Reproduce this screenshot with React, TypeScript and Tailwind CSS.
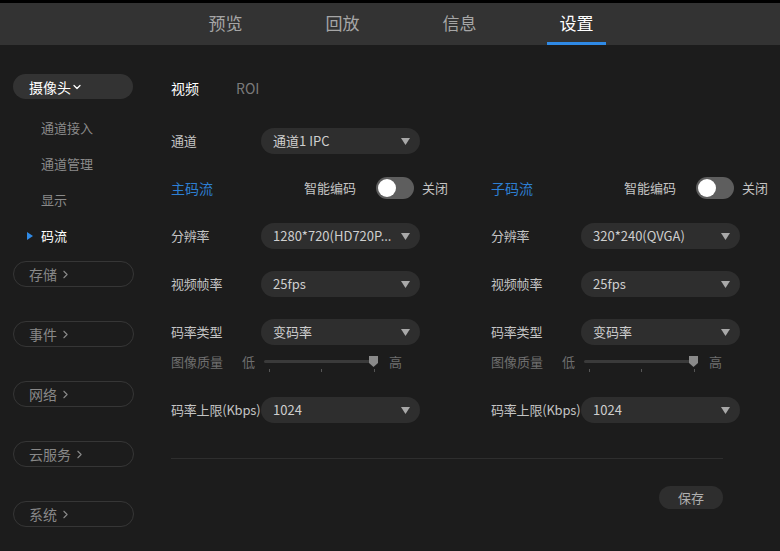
import { ChevronDown, ChevronRight } from 'lucide-react';

const navItems = ['预览', '回放', '信息', '设置'];
const subItems = ['通道接入', '通道管理', '显示', '码流'];
const groups = ['存储', '事件', '网络', '云服务', '系统'];

function Caret() {
  return (
    <svg width="9" height="7" viewBox="0 0 9 7" className="shrink-0">
      <polygon points="0,0 9,0 4.5,7" fill="#a8a8a8" />
    </svg>
  );
}

function Select({ value }: { value: string }) {
  return (
    <div className="w-[159px] h-[26px] shrink-0 rounded-full bg-[#2e2e2e] flex items-center justify-between pl-[12px] pr-[10px]">
      <span className="text-[13px] text-[#cfcfcf] leading-[18px] whitespace-nowrap">{value}</span>
      <Caret />
    </div>
  );
}

function Row({ label, value, mt = 'mt-[22px]' }: { label: string; value: string; mt?: string }) {
  return (
    <div className={`flex items-center h-[26px] ${mt}`}>
      <span className="w-[90px] shrink-0 text-[13px] text-[#c4c4c4] leading-[18px] whitespace-nowrap tracking-[-0.2px]">
        {label}
      </span>
      <Select value={value} />
    </div>
  );
}

function Toggle() {
  return (
    <div className="w-[38px] h-[22px] shrink-0 rounded-full bg-[#5e5e5e] flex items-center px-[2px]">
      <div className="w-[18px] h-[18px] rounded-full bg-white" />
    </div>
  );
}

function Slider() {
  return (
    <div className="flex items-center h-[26px] mt-[4px]">
      <span className="w-[71px] shrink-0 text-[13px] text-[#6e6e6e] leading-[18px]">图像质量</span>
      <span className="w-[22px] shrink-0 text-[13px] text-[#6e6e6e] leading-[18px]">低</span>
      <div className="relative w-[113px] h-[26px] shrink-0">
        <div className="absolute left-0 right-0 top-[11px] h-[3px] rounded-full bg-[#3a3a3a]" />
        <div className="absolute left-[5px] top-[20px] w-px h-[3px] bg-[#555]" />
        <div className="absolute left-[57px] top-[20px] w-px h-[3px] bg-[#555]" />
        <div className="absolute left-[110px] top-[20px] w-px h-[3px] bg-[#555]" />
        <svg width="9" height="11" viewBox="0 0 9 11" className="absolute left-[105px] top-[7px]">
          <path d="M0 0 H9 V7 L4.5 11 L0 7 Z" fill="#8a8a8a" />
        </svg>
      </div>
      <span className="ml-[12px] text-[13px] text-[#6e6e6e] leading-[18px]">高</span>
    </div>
  );
}

function StreamColumn({ title, resolution }: { title: string; resolution: string }) {
  return (
    <div className="w-[320px] shrink-0 flex flex-col">
      <div className="flex items-center h-[26px]">
        <span className="w-[133px] shrink-0 text-[14px] text-[#2d7fd3] leading-[18px]">{title}</span>
        <span className="w-[72px] shrink-0 text-[13px] text-[#c4c4c4] leading-[18px]">智能编码</span>
        <Toggle />
        <span className="ml-[8px] text-[13px] text-[#c4c4c4] leading-[18px] whitespace-nowrap">关闭</span>
      </div>
      <Row label="分辨率" value={resolution} />
      <Row label="视频帧率" value="25fps" />
      <Row label="码率类型" value="变码率" />
      <Slider />
      <Row label="码率上限(Kbps)" value="1024" />
    </div>
  );
}

export default function App() {
  return (
    <div className="w-[780px] h-[551px] bg-[#1c1c1c] flex flex-col overflow-hidden font-['Noto_Sans_CJK_SC','Noto_Sans',sans-serif]">
      <div className="h-[3px] bg-black" />

      {/* Header */}
      <header className="h-[42px] bg-[#333333] flex pl-[196px] gap-[58px]">
        {navItems.map((item) => {
          const active = item === '设置';
          return (
            <div key={item} className="w-[59px] flex flex-col items-center">
              <span
                className={`flex-1 flex items-center text-[17px] leading-none ${
                  active ? 'text-white' : 'text-[#a6a6a6]'
                }`}
              >
                {item}
              </span>
              <div className={`w-full h-[3px] ${active ? 'bg-[#2f8ae6]' : ''}`} />
            </div>
          );
        })}
      </header>

      <div className="flex flex-1">
        {/* Sidebar */}
        <aside className="w-[171px] shrink-0 pl-[13px] pt-[29px] flex flex-col">
          <div className="w-[120px] h-[25px] rounded-full bg-[#333333] flex items-center pl-[16px] text-white">
            <span className="text-[14px] leading-[18px]">摄像头</span>
            <ChevronDown size={12} strokeWidth={2.5} />
          </div>
          <div className="flex flex-col mt-[11px]">
            {subItems.map((item) => {
              const active = item === '码流';
              return (
                <div key={item} className="h-[36px] flex items-center">
                  <span className="w-[28px] flex justify-start pl-[14px]">
                    {active && (
                      <svg width="6" height="8" viewBox="0 0 6 8">
                        <polygon points="0,0 6,4 0,8" fill="#2f8ae6" />
                      </svg>
                    )}
                  </span>
                  <span
                    className={`text-[13px] leading-[18px] ${active ? 'text-white' : 'text-[#8a8a8a]'}`}
                  >
                    {item}
                  </span>
                </div>
              );
            })}
          </div>
          <div className="flex flex-col gap-[34px] mt-[7px]">
            {groups.map((g) => (
              <div
                key={g}
                className="w-[121px] h-[26px] rounded-full border border-[#363636] flex items-center pl-[15px] text-[#888888]"
              >
                <span className="text-[14px] leading-[18px]">{g}</span>
                <ChevronRight size={13} strokeWidth={2} className="ml-[2px]" />
              </div>
            ))}
          </div>
        </aside>

        {/* Main */}
        <main className="flex-1 min-w-0 pt-[30px] flex flex-col">
          <div className="flex items-center h-[26px] gap-[37px]">
            <span className="text-[14px] text-white leading-[18px]">视频</span>
            <span className="text-[14px] text-[#7a7a7a] leading-[18px]">ROI</span>
          </div>
          <Row label="通道" value="通道1 IPC" mt="mt-[27px]" />
          <div className="flex mt-[21px]">
            <StreamColumn title="主码流" resolution="1280*720(HD720P..." />
            <StreamColumn title="子码流" resolution="320*240(QVGA)" />
          </div>
          <div className="w-[552px] h-px bg-[#2e2e2e] mt-[35px]" />
          <div className="w-[552px] flex justify-end mt-[27px]">
            <div className="w-[64px] h-[23px] rounded-full bg-[#2e2e2e] flex items-center justify-center text-[13px] text-[#b0b0b0] leading-[18px]">
              保存
            </div>
          </div>
        </main>
      </div>
    </div>
  );
}
